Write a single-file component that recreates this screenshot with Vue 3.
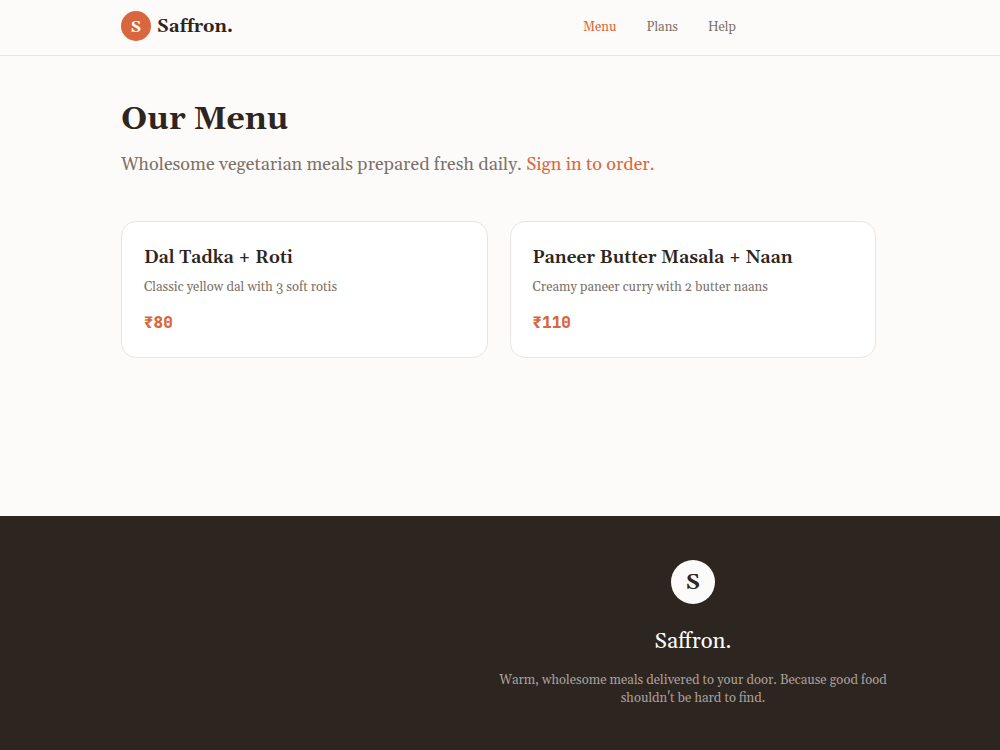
<script setup>
const links = ['Menu', 'Plans', 'Help']
const meals = [
  { name: 'Dal Tadka + Roti', text: 'Classic yellow dal with 3 soft rotis', price: '₹80' },
  { name: 'Paneer Butter Masala + Naan', text: 'Creamy paneer curry with 2 butter naans', price: '₹110' },
]
</script>

<template>
  <div class="page">
    <header class="top">
      <div class="wrap bar">
        <a href="#" class="brand"><span class="mark">S</span><span>Saffron.</span></a>
        <nav class="nav">
          <a v-for="(l, i) in links" :key="l" href="#" :class="{ active: i === 0 }">{{ l }}</a>
        </nav>
      </div>
    </header>
    <main class="wrap main">
      <h1>Our Menu</h1>
      <p class="lead">Wholesome vegetarian meals prepared fresh daily. <a href="#">Sign in to order.</a></p>
      <div class="grid">
        <article v-for="m in meals" :key="m.name" class="card">
          <h2>{{ m.name }}</h2>
          <p class="text">{{ m.text }}</p>
          <p class="price">{{ m.price }}</p>
        </article>
      </div>
    </main>
    <footer class="foot">
      <div class="about">
        <span class="seal">S</span>
        <p class="name">Saffron.</p>
        <p class="blurb">Warm, wholesome meals delivered to your door. Because good food shouldn't be hard to find.</p>
      </div>
    </footer>
  </div>
</template>

<style>
body { margin: 0; background: #fdfbf9; }
</style>

<style scoped>
.page { min-height: 100vh; display: flex; flex-direction: column; font-family: Georgia, Gelasio, "Liberation Serif", serif; color: #2d2520; }
* { box-sizing: border-box; }
a { text-decoration: none; color: inherit; }
h1, h2, p { margin: 0; }
.wrap { width: 100%; max-width: 800px; margin: 0 auto; padding: 0 24px 0 21px; }
.top { border-bottom: 1px solid #e9e5e1; padding: 11px 0 14px; }
.bar { display: flex; align-items: center; justify-content: space-between; }
.brand { display: flex; align-items: center; gap: 6px; font-size: 18px; line-height: 28px; font-weight: 700; }
.brand span { padding-top: 2px; }
.mark { width: 30px; height: 30px; border-radius: 50%; background: #d9673d; color: #fff; display: grid; place-items: center; font-size: 16px; }
.nav { display: flex; gap: 30px; font-size: 13px; line-height: 20px; color: #7d7268; margin-right: 140px; padding-top: 1px; }
.nav .active, .lead a { color: #d9673d; }
.main { padding-top: 42px; }
h1 { font-size: 32px; line-height: 44px; }
.lead { font-size: 18px; line-height: 28px; margin-top: 9px; color: #7d7268; }
.grid { display: grid; grid-template-columns: 1fr 1fr; gap: 22px; margin-top: 42px; }
.card { background: #fff; border: 1px solid #e9e5e1; border-radius: 15px; padding: 23px 22px 22px; }
h2 { font-size: 18px; line-height: 26px; font-weight: 600; }
.text { font-size: 13px; line-height: 20px; margin-top: 6px; color: #7d7268; }
.price { font-family: "JetBrains Mono", "Noto Sans Mono", "Liberation Mono", monospace; font-weight: 800; font-size: 16px; line-height: 24px; margin-top: 14px; color: #d9673d; }
.foot { margin-top: 158px; flex: 1; background: #2d2520; padding: 44px 107px 44px 0; display: flex; justify-content: flex-end; }
.about { width: 400px; display: flex; flex-direction: column; align-items: center; text-align: center; }
.seal { width: 44px; height: 44px; padding-top: 2px; border-radius: 50%; background: #fdfbf9; color: #2d2520; display: grid; place-items: center; font-size: 22px; font-weight: 700; }
.name { font-size: 22px; line-height: 32px; margin-top: 22px; color: #fdfbf9; }
.blurb { font-size: 13px; line-height: 18px; margin-top: 13px; color: #a8a09b; }
</style>
